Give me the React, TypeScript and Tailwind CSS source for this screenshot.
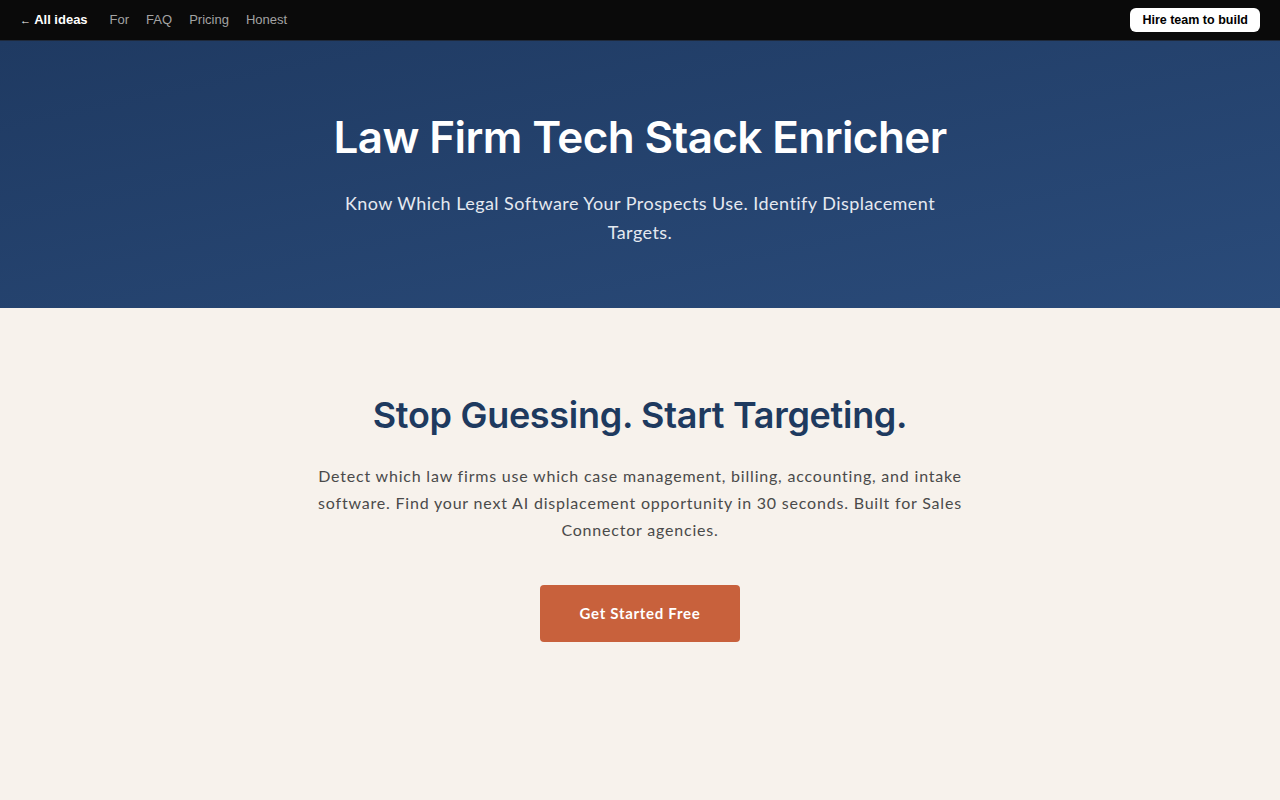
const navLinks = ["For", "FAQ", "Pricing", "Honest"];

function TopBar() {
  return (
    <header className="h-[41px] bg-[#0a0a0a] border-b border-[#1e293b] flex items-center justify-between px-5 font-['Liberation_Sans',Arial,sans-serif] text-[13px]">
      <nav className="flex items-center gap-[17px]">
        <a className="text-white font-bold mr-[5px]">
          <span className="text-[11px] font-normal">←</span> All ideas
        </a>
        {navLinks.map((l) => (
          <a key={l} className="text-[#a3a3a3]">
            {l}
          </a>
        ))}
      </nav>
      <button className="bg-white text-black font-bold text-[12.5px] h-[24px] px-[12px] rounded-md">
        Hire team to build
      </button>
    </header>
  );
}

export default function App() {
  return (
    <div className="min-h-[800px] bg-[#f7f2ec] font-['Lato',sans-serif]">
      <TopBar />
      <section className="h-[267px] bg-gradient-to-br from-[#1f3a62] to-[#2a4b7a] flex flex-col items-center pt-[70px]">
        <h1 className="font-['Inter',sans-serif] font-semibold text-white text-[44px] leading-[52px] tracking-[-0.6px]">
          Law Firm Tech Stack Enricher
        </h1>
        <p className="mt-[26px] max-w-[600px] text-center text-[#e5e9f0] text-[18px] leading-[29px] tracking-[0.45px]">
          Know Which Legal Software Your Prospects Use. Identify Displacement Targets.
        </p>
      </section>
      <section className="flex flex-col items-center pt-[85px]">
        <h2 className="font-['Inter',sans-serif] font-semibold text-[#1e3a5f] text-[36px] leading-[44px] tracking-[-0.3px]">
          Stop Guessing. Start Targeting.
        </h2>
        <p className="mt-[25px] max-w-[670px] text-center text-[#4a4a4a] text-[16px] leading-[27px] tracking-[0.8px]">
          Detect which law firms use which case management, billing, accounting, and intake
          software. Find your next AI displacement opportunity in 30 seconds. Built for Sales
          Connector agencies.
        </p>
        <button className="mt-[42px] w-[200px] h-[57px] bg-[#c8613c] rounded text-white font-bold text-[15px] tracking-[0.7px]">
          Get Started Free
        </button>
      </section>
    </div>
  );
}
